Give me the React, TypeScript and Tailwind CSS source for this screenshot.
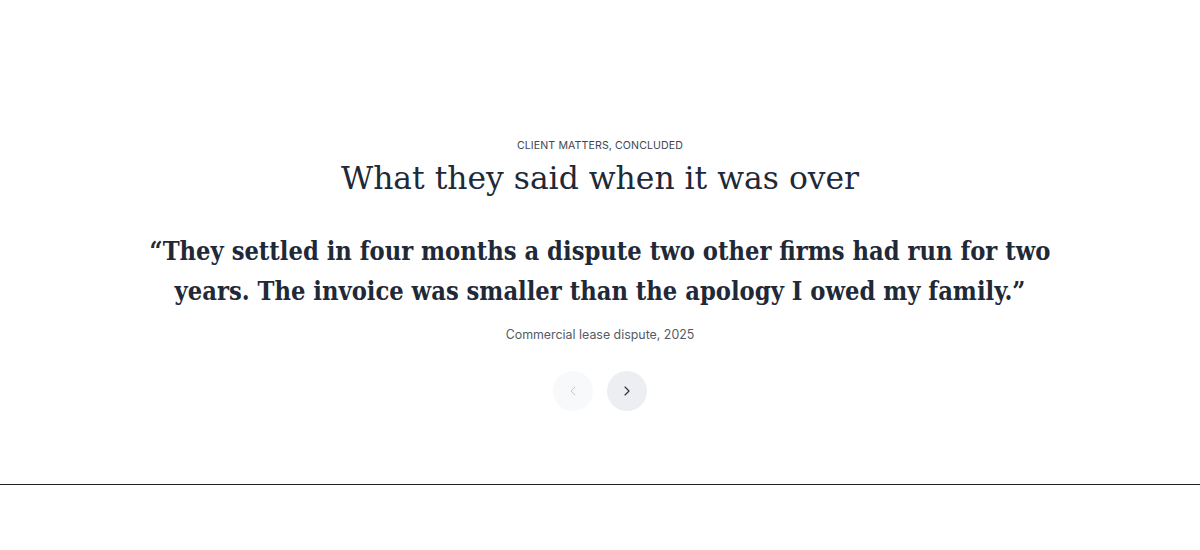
import { ChevronLeft, ChevronRight } from 'lucide-react';

export default function App() {
  return (
    <div className="min-h-[550px] bg-white">
      <section className="border-b border-[#222] pt-[138px] pb-[73px]">
        <div className="mx-auto flex max-w-[1000px] flex-col items-center px-6 text-center">
          <p className="font-['Inter',sans-serif] text-[10.6px] leading-4 tracking-[0.01em] text-[#3f4650] uppercase">
            Client matters, concluded
          </p>
          <h2 className="mt-1 font-['DejaVu_Serif',serif] text-[31.4px] leading-10 text-[#1f2937]">
            What they said when it was over
          </h2>

          <blockquote className="mt-[33px] max-w-[930px] font-['DejaVu_Serif',serif] font-stretch-condensed text-[25.25px] font-bold leading-10 text-[#1f2937]">
            “They settled in four months a dispute two other firms had run for two years. The invoice was smaller than the apology I owed my family.”
          </blockquote>
          <p className="mt-[14px] font-['Inter',sans-serif] text-[12.4px] leading-5 text-[#555b63]">
            Commercial lease dispute, 2025
          </p>

          <div className="mt-[26px] flex items-center gap-[14px]">
            <button
              disabled
              className="flex h-10 w-10 items-center justify-center rounded-full bg-[#f8f9fa] text-[#c4c8ce]"
            >
              <ChevronLeft className="h-4 w-4" strokeWidth={1.5} />
            </button>
            <button className="flex h-10 w-10 items-center justify-center rounded-full bg-[#eceef1] text-[#2b323c]">
              <ChevronRight className="h-4 w-4" strokeWidth={1.75} />
            </button>
          </div>
        </div>
      </section>
    </div>
  );
}
